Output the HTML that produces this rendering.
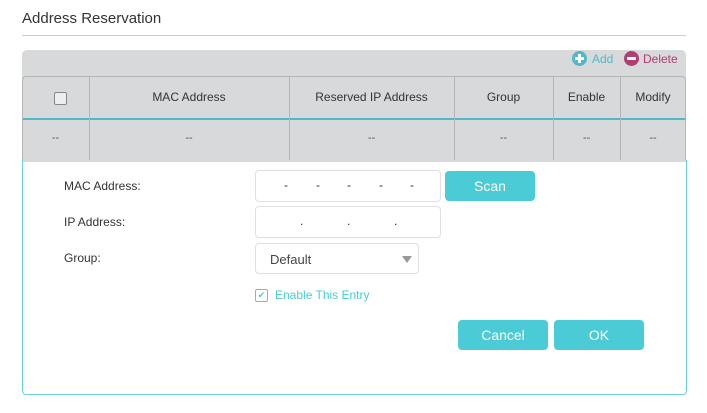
<!DOCTYPE html>
<html><head><style>
body{margin:0;width:707px;height:413px;background:#fff;font-family:"Liberation Sans",sans-serif;position:relative;overflow:hidden}
.a{position:absolute}
.t{font-size:12px;color:#333}
.c{position:absolute;text-align:center;font-size:12px;color:#333}
.v{position:absolute;top:0;bottom:0;width:1px;background:#b5b5b5}
.btn{position:absolute;background:#4acbd6;color:#fff;border-radius:4px;text-align:center;font-size:14px}
.in{position:absolute;border:1px solid #e0e0e0;border-radius:4px;background:#fff}
</style></head><body>
<div class="a" style="left:22px;top:10px;font-size:15px;color:#333">Address Reservation</div>
<div class="a" style="left:22px;top:35px;width:664px;height:1px;background:#ccc"></div>
<div class="a" style="left:22px;top:50px;width:664px;height:112px;background:#d7d9da;border-radius:5px 5px 0 0"></div>
<div class="a" style="left:572px;top:51px;width:15px;height:15px;border-radius:50%;background:#4fb9c8"></div>
<div class="a" style="left:575px;top:57px;width:9px;height:3px;background:#fff"></div>
<div class="a" style="left:578px;top:54px;width:3px;height:9px;background:#fff"></div>
<div class="a" style="left:592px;top:52px;font-size:12px;color:#4fb9c8">Add</div>
<div class="a" style="left:624px;top:51px;width:15px;height:15px;border-radius:50%;background:#b13e73"></div>
<div class="a" style="left:627px;top:57px;width:9px;height:3px;background:#fff"></div>
<div class="a" style="left:643px;top:52px;font-size:12px;color:#b13e73">Delete</div>
<div class="a" style="left:22px;top:76px;width:664px;height:84px;border:1px solid #b5b5b5;border-bottom:none;border-radius:4px 4px 0 0;box-sizing:border-box">
<div class="a" style="left:0;right:0;top:41px;height:2px;background:#4fb9c8"></div>
<div class="v" style="left:66px"></div><div class="v" style="left:266px"></div><div class="v" style="left:431px"></div><div class="v" style="left:530px"></div><div class="v" style="left:597px"></div>
</div>
<div class="a" style="left:54px;top:92px;width:11px;height:11px;border:1px solid #888;border-radius:2px;background:#eee"></div>
<div class="c" style="left:89px;width:200px;top:90px">MAC Address</div>
<div class="c" style="left:289px;width:165px;top:90px">Reserved IP Address</div>
<div class="c" style="left:454px;width:99px;top:90px">Group</div>
<div class="c" style="left:553px;width:67px;top:90px">Enable</div>
<div class="c" style="left:620px;width:66px;top:90px">Modify</div>
<div class="c" style="left:22px;width:67px;top:132px;color:#555;font-size:11px">--</div>
<div class="c" style="left:89px;width:200px;top:132px;color:#555;font-size:11px">--</div>
<div class="c" style="left:289px;width:165px;top:132px;color:#555;font-size:11px">--</div>
<div class="c" style="left:454px;width:99px;top:132px;color:#555;font-size:11px">--</div>
<div class="c" style="left:553px;width:67px;top:132px;color:#555;font-size:11px">--</div>
<div class="c" style="left:620px;width:66px;top:132px;color:#555;font-size:11px">--</div>
<div class="a" style="left:22px;top:160px;width:665px;height:235px;border:1.5px solid #6cd0d8;border-top:none;box-sizing:border-box;border-radius:0 0 4px 4px"></div>
<div class="a t" style="left:64px;top:179px">MAC Address:</div>
<div class="a t" style="left:64px;top:215px">IP Address:</div>
<div class="a t" style="left:64px;top:251px">Group:</div>
<div class="in" style="left:255px;top:170px;width:184px;height:30px">
<div class="a t" style="left:28px;top:7px">-</div><div class="a t" style="left:60px;top:7px">-</div><div class="a t" style="left:91px;top:7px">-</div><div class="a t" style="left:123px;top:7px">-</div><div class="a t" style="left:154px;top:7px">-</div></div>
<div class="btn" style="left:445px;top:171px;width:90px;height:30px;line-height:30px">Scan</div>
<div class="in" style="left:255px;top:206px;width:184px;height:30px">
<div class="a t" style="left:44px;top:7px">.</div><div class="a t" style="left:91px;top:7px">.</div><div class="a t" style="left:138px;top:7px">.</div></div>
<div class="in" style="left:255px;top:243px;width:162px;height:29px"><div class="a" style="left:14px;top:8px;font-size:13px;color:#444">Default</div><div class="a" style="left:146px;top:12px;border:5px solid transparent;border-top:7px solid #999;border-bottom:none"></div></div>
<div class="a" style="left:255px;top:289px;width:11px;height:11px;border:1px solid #aaa;border-radius:2px;color:#4acbd6;font-size:9px;line-height:11px;text-align:center">✔</div>
<div class="a" style="left:275px;top:288px;font-size:12px;color:#4acbd6">Enable This Entry</div>
<div class="btn" style="left:458px;top:320px;width:90px;height:30px;line-height:30px">Cancel</div>
<div class="btn" style="left:554px;top:320px;width:90px;height:30px;line-height:30px">OK</div>
</body></html>
